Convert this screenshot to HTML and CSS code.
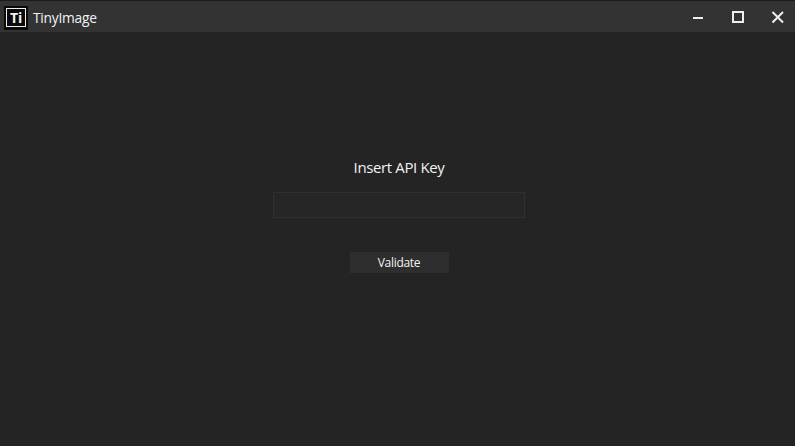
FILE: index.html
```html
<!DOCTYPE html>
<html lang="en">
<head>
<meta charset="utf-8">
<title>TinyImage</title>
<link rel="stylesheet" href="styles.css">
</head>
<body>
<div class="window">
  <header class="titlebar">
    <span class="logo"><span class="logo-frame">Ti</span></span>
    <span class="title">TinyImage</span>
    <div class="controls">
      <svg width="40" height="31" viewBox="0 0 40 31"><path d="M14 17h10" /></svg>
      <svg width="40" height="31" viewBox="0 0 40 31"><rect x="14" y="11" width="10" height="10" /></svg>
      <svg width="40" height="31" viewBox="0 0 40 31"><path d="M13.5 11l10.5 10.5M24 11l-10.5 10.5" /></svg>
    </div>
  </header>
  <main class="content">
    <label class="prompt" for="key">Insert API Key</label>
    <input class="key" id="key" type="text">
    <button class="validate" type="button">Validate</button>
  </main>
</div>
</body>
</html>
```
FILE: styles.css
```css
* { box-sizing: border-box; }
body { margin: 0; background: #242424; color: #f2f2f2; font-family: "Open Sans", "Noto Sans", sans-serif; }
.window { height: 446px; display: flex; flex-direction: column; border-top: 1px solid #1b1b1b; overflow: hidden; }
.titlebar { height: 31px; background: #333; display: flex; align-items: center; flex: none; }
.logo { width: 24px; height: 24px; margin-left: 4px; margin-top: 3px; background: #0a0a0a; padding: 2px; }
.logo-frame { display: block; width: 20px; height: 19px; border: 1px solid #eee; font-size: 14px; font-weight: 700; line-height: 17px; text-align: center; letter-spacing: -0.3px; }
.title { margin: 3px 0 0 5px; font-size: 13.8px; line-height: 18px; letter-spacing: -0.25px; }
.controls { margin-left: auto; display: flex; margin-right: -4px; }
.controls svg { fill: none; stroke: #eee; stroke-width: 2; }
.content { flex: 1; display: flex; flex-direction: column; align-items: center; padding: 125px 0 0 3px; }
.prompt { font-size: 15px; line-height: 20px; letter-spacing: -0.37px; }
.key { width: 252px; height: 26px; margin: 15px 0 34px; background: #262626; border: 1px solid #303030; color: #fff; padding: 2px 6px; }
.validate { width: 99px; height: 21px; background: #2e2e2e; border: 0; padding: 0; color: #f2f2f2; font: 12px/21px "Open Sans", sans-serif; letter-spacing: -0.3px; }
```
